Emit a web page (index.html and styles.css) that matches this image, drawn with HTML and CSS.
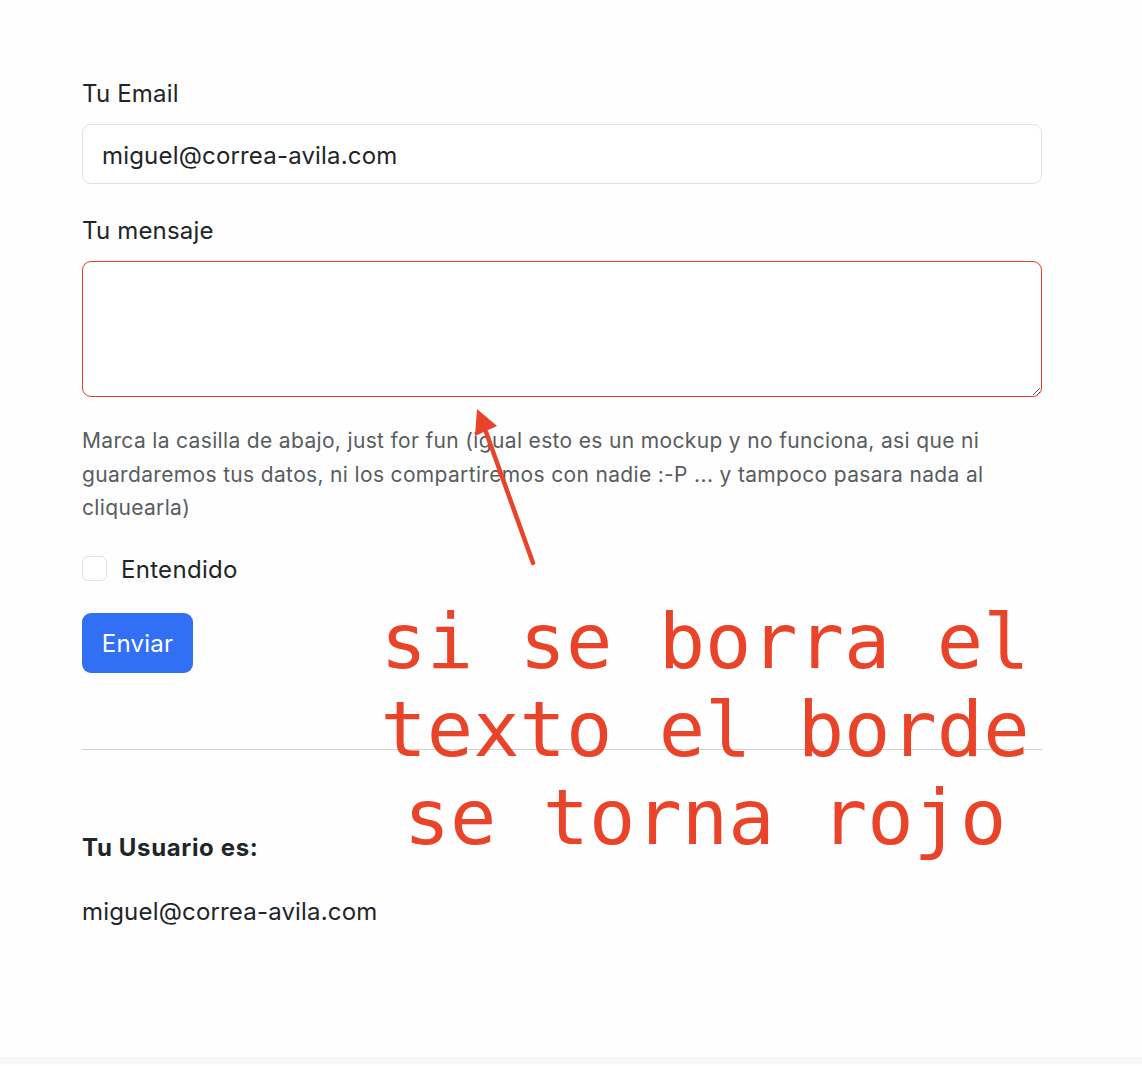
FILE: index.html
```
<!DOCTYPE html>
<html lang="es">
<head>
<meta charset="utf-8">
<title>Formulario</title>
<link rel="stylesheet" href="styles.css">
</head>
<body>
<main class="page">
  <form class="form">
    <label class="label" for="email">Tu Email</label>
    <input class="input" id="email" type="email" value="miguel@correa-avila.com">

    <label class="label label-msg" for="msg">Tu mensaje</label>
    <textarea class="textarea" id="msg"></textarea>

    <p class="help">Marca la casilla de abajo, just for fun (igual esto es un mockup y no funciona, asi que ni guardaremos tus datos, ni los compartiremos con nadie :-P ... y tampoco pasara nada al cliquearla)</p>

    <div class="check-row">
      <input class="check" type="checkbox" id="ok">
      <label class="check-label" for="ok">Entendido</label>
    </div>

    <button class="btn" type="button">Enviar</button>
  </form>

  <hr class="rule">

  <h3 class="user-title">Tu Usuario es:</h3>
  <p class="user-email">miguel@correa-avila.com</p>
</main>
<footer class="footer"></footer>

<svg class="arrow" width="1142" height="1066" viewBox="0 0 1142 1066" aria-hidden="true">
  <line x1="533" y1="563" x2="486" y2="432" stroke="#e9442a" stroke-width="4.5" stroke-linecap="round"/>
  <polygon points="477,409 497,426 475,436" fill="#e9442a"/>
</svg>
<div class="note">si se borra el
texto el borde
se torna rojo</div>
</body>
</html>
```
FILE: styles.css
```
html, body {
  margin: 0;
  padding: 0;
}
body {
  background: #fefefe;
  font-family: Inter, "Noto Sans", "Liberation Sans", sans-serif;
  color: #212529;
  min-height: 1066px;
  display: flex;
  flex-direction: column;
  position: relative;
  letter-spacing: 0.18px;
}
.page {
  flex: 1;
  width: 960px;
  padding: 75px 0 0 82px;
}
.form {
  display: flex;
  flex-direction: column;
  align-items: flex-start;
}
.label {
  font-size: 24px;
  line-height: 34px;
  padding-top: 2px;
  margin-bottom: 13px;
}
.label-msg {
  margin-top: 28px;
}
.input {
  box-sizing: border-box;
  width: 960px;
  height: 60px;
  margin: 0;
  padding: 2px 19px 0;
  border: 1px solid #dee2e6;
  border-radius: 9px;
  background: #fff;
  font-family: inherit;
  font-size: 24px;
  letter-spacing: 0.18px;
  color: #212529;
  outline: none;
}
.textarea {
  box-sizing: border-box;
  width: 960px;
  height: 136px;
  margin: 0;
  padding: 9px 19px;
  border: 1px solid #e5392c;
  border-radius: 9px;
  background: #fff;
  font-family: inherit;
  font-size: 24px;
  outline: none;
}
.help {
  margin: 26px 0 0;
  padding-top: 1px;
  font-size: 21px;
  line-height: 33.5px;
  letter-spacing: 0.34px;
  color: #595c5f;
}
.check-row {
  display: flex;
  align-items: center;
  gap: 14px;
  margin-top: 26px;
  height: 36px;
}
.check {
  appearance: none;
  -webkit-appearance: none;
  box-sizing: border-box;
  width: 25px;
  height: 25px;
  margin: 0;
  border: 1px solid #dee2e6;
  border-radius: 6px;
  background: #fff;
}
.check-label {
  font-size: 24px;
  line-height: 34px;
  padding-top: 2px;
  letter-spacing: 0.3px;
}
.btn {
  margin-top: 26px;
  width: 111px;
  height: 60px;
  border: none;
  border-radius: 9px;
  background: #3170f4;
  color: #fff;
  font-family: inherit;
  font-size: 24px;
  letter-spacing: 0.2px;
  padding: 2px 0 0;
}
.rule {
  margin: 76px 0 0;
  border: none;
  border-top: 1px solid #cfd0d1;
  width: 960px;
}
.user-title {
  margin: 79px 0 0;
  padding-top: 2px;
  font-size: 24px;
  line-height: 34px;
  font-weight: 700;
  letter-spacing: 0.65px;
}
.user-email {
  margin: 28px 0 0;
  padding-top: 2px;
  font-size: 24px;
  line-height: 34px;
}
.footer {
  height: 7px;
  margin-bottom: 2px;
  background: #f6f7f8;
}
.arrow {
  position: absolute;
  left: 0;
  top: 0;
  pointer-events: none;
}
.note {
  position: absolute;
  left: 380px;
  top: 598px;
  width: 650px;
  text-align: center;
  white-space: pre;
  font-family: "DejaVu Sans Mono", monospace;
  font-size: 77px;
  line-height: 88px;
  letter-spacing: 0;
  color: #e9442a;
  pointer-events: none;
}
```
